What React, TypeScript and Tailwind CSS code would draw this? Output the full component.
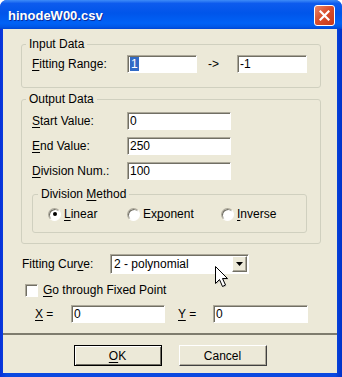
import type { ReactNode } from "react";

function U({ children }: { children: ReactNode }) {
  return <span className="underline underline-offset-[2px]">{children}</span>;
}

function Field({ children, className = "" }: { children?: ReactNode; className?: string }) {
  return (
    <div
      className={`h-[18px] flex items-center pl-[2px] bg-white border border-t-[#ACA899] border-l-[#ACA899] border-b-white border-r-white shadow-[inset_1px_1px_0_#716F64] ${className}`}
    >
      {children}
    </div>
  );
}

function Radio({ checked = false }: { checked?: boolean }) {
  return (
    <div className="w-[13px] h-[13px] rounded-full bg-white border border-t-[#ACA899] border-l-[#ACA899] border-b-white border-r-white shadow-[inset_1px_1px_0_#716F64] flex items-center justify-center">
      {checked && <div className="w-[4px] h-[4px] rounded-full bg-black" />}
    </div>
  );
}

function Cursor() {
  return (
    <svg
      className="absolute left-[211px] top-[236px]"
      width="16"
      height="24"
      viewBox="0 0 16 24"
    >
      <path d="M2.5 2.5 V19.5 L6.5 15.5 L9.5 22.5 L12.5 21 L9.5 14.5 H14.5 Z" fill="#9a9a9a" opacity="0.5" />
      <path d="M1.5 1.5 V18.5 L5.5 14.5 L8.5 21.5 L11.5 20 L8.5 13.5 H13.5 Z" fill="white" stroke="black" strokeWidth="1" strokeLinejoin="miter" />
    </svg>
  );
}

export default function App() {
  return (
    <div className="w-[342px] h-[377px] bg-white font-['Liberation_Sans',Arial,sans-serif]">
      <div className="w-full h-full flex flex-col rounded-t-[7px] overflow-hidden bg-[linear-gradient(to_right,#0831D9,#0A48E0_2%,#0A48E0_98%,#0030C8)]">
        {/* title bar */}
        <div className="h-[29px] flex items-center justify-between pl-[8px] pr-[7px] pt-[2px] bg-[linear-gradient(to_bottom,#3E8CF8_0%,#0D5BEE_12%,#0055EA_45%,#0062F6_80%,#0058E8_92%,#0046D4_100%)]">
          <span className="text-white font-bold text-[13px] leading-none [text-shadow:1px_1px_0_#0A2C9A]">
            hinodeW00.csv
          </span>
          <div className="w-[21px] h-[21px] rounded-[3px] border border-white bg-[linear-gradient(135deg,#E9876A_0%,#DA4F2C_45%,#C5381A_100%)] flex items-center justify-center">
            <svg width="11" height="11" viewBox="0 0 11 11">
              <path d="M1.5 1.5 L9.5 9.5 M9.5 1.5 L1.5 9.5" stroke="white" strokeWidth="2.2" strokeLinecap="square" />
            </svg>
          </div>
        </div>

        {/* client area */}
        <div className="relative flex-1 ml-[3px] mr-[5px] mb-[4px] bg-[#ECE9D8] flex flex-col text-[12px] leading-[14px] text-black">
          <fieldset className="mt-[8px] ml-[18px] mr-[16px] border border-[#D0D0BF] rounded-[3px] pl-[4px] pb-[14px]">
            <legend className="px-[3px] leading-[14px]">Input Data</legend>
            <div className="flex items-center mt-[4px] pl-[6px]">
              <span className="w-[95px]">
                <U>F</U>itting Range:
              </span>
              <Field className="w-[70px]">
                <span className="bg-[#316AC5] text-white px-[1px]">1</span>
              </Field>
              <span className="ml-[11px] w-[29px]">-&gt;</span>
              <Field className="w-[70px]">-1</Field>
            </div>
          </fieldset>

          <fieldset className="mt-[4px] ml-[18px] mr-[16px] border border-[#D0D0BF] rounded-[3px] pl-[4px] pr-[13px] pb-[10px]">
            <legend className="px-[3px] leading-[14px]">Output Data</legend>
            <div className="flex flex-col gap-[7px] mt-[6px] pl-[6px]">
              <div className="flex items-center">
                <span className="w-[95px]">
                  <U>S</U>tart Value:
                </span>
                <Field className="w-[104px]">0</Field>
              </div>
              <div className="flex items-center">
                <span className="w-[95px]">
                  <U>E</U>nd Value:
                </span>
                <Field className="w-[104px]">250</Field>
              </div>
              <div className="flex items-center">
                <span className="w-[95px]">
                  <U>D</U>ivision Num.:
                </span>
                <Field className="w-[104px]">100</Field>
              </div>
            </div>
            <fieldset className="mt-[7px] ml-[6px] border border-[#D0D0BF] rounded-[3px] pl-[5px] pb-[11px]">
              <legend className="px-[3px] leading-[14px]">
                Division <U>M</U>ethod
              </legend>
              <div className="flex items-center h-[14px] mt-[6px] pl-[10px]">
                <div className="w-[79px] flex items-center gap-[3px]">
                  <Radio checked />
                  <span>
                    <U>L</U>inear
                  </span>
                </div>
                <div className="w-[94px] flex items-center gap-[3px]">
                  <Radio />
                  <span>
                    Ex<U>p</U>onent
                  </span>
                </div>
                <div className="flex items-center gap-[3px]">
                  <Radio />
                  <span>
                    <U>I</U>nverse
                  </span>
                </div>
              </div>
            </fieldset>
          </fieldset>

          <div className="flex items-center mt-[10px] pl-[19px]">
            <span className="w-[88px]">
              Fitting Cur<U>v</U>e:
            </span>
            <div className="w-[139px] h-[20px] flex items-center justify-between bg-white border border-t-[#ACA899] border-l-[#ACA899] border-b-white border-r-white shadow-[inset_1px_1px_0_#716F64] pl-[3px] pr-[1px]">
              <span>2 - polynomial</span>
              <div className="w-[15px] h-[16px] bg-[#ECE9D8] border border-t-white border-l-white border-b-[#716F64] border-r-[#716F64] shadow-[inset_-1px_-1px_0_#ACA899] flex items-center justify-center">
                <svg width="7" height="4" viewBox="0 0 7 4">
                  <path d="M0 0 H7 L3.5 4 Z" fill="black" />
                </svg>
              </div>
            </div>
          </div>

          <div className="flex items-center mt-[9px] pl-[22px] gap-[5px]">
            <div className="w-[13px] h-[13px] bg-white border border-t-[#ACA899] border-l-[#ACA899] border-b-white border-r-white shadow-[inset_1px_1px_0_#716F64]" />
            <span>
              <U>G</U>o through Fixed Point
            </span>
          </div>

          <div className="flex items-center mt-[8px] pl-[32px]">
            <span className="w-[36px]">
              <U>X</U> =
            </span>
            <Field className="w-[94px]">0</Field>
            <span className="ml-[13px] w-[35px]">
              <U>Y</U> =
            </span>
            <Field className="w-[95px]">0</Field>
          </div>

          <div className="mt-[10px] h-[2px] bg-[#7E7C6E]" />

          <div className="flex justify-center gap-[17px] mt-[10px]">
            <div className="w-[88px] h-[21px] border border-black bg-[#ECE9D8] shadow-[inset_1px_1px_0_white,inset_-1px_-1px_0_#716F64] flex items-center justify-center">
              <span>
                <U>O</U>K
              </span>
            </div>
            <div className="w-[88px] h-[21px] border border-t-white border-l-white border-b-[#404040] border-r-[#404040] bg-[#ECE9D8] shadow-[inset_-1px_-1px_0_#ACA899] flex items-center justify-center">
              Cancel
            </div>
          </div>

          <Cursor />
        </div>
      </div>
    </div>
  );
}
